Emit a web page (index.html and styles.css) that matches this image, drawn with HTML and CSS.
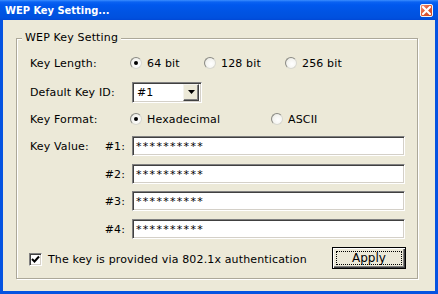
FILE: index.html
```html
<!DOCTYPE html>
<html>
<head>
<meta charset="utf-8">
<title>WEP Key Setting</title>
<link rel="stylesheet" href="styles.css">
</head>
<body>
<div class="window">
  <div class="titlebar">
    <span class="title">WEP Key Setting...</span>
    <span class="close"><svg width="9" height="9" viewBox="0 0 9 9"><path d="M1 1 L8 8 M8 1 L1 8" stroke="#fff" stroke-width="2.2" stroke-linecap="square"/></svg></span>
  </div>
  <div class="client">
    <div class="group">
      <span class="legend">WEP Key Setting</span>

      <div class="row row-length">
        <span class="label">Key Length:</span>
        <div class="opts opts-length">
          <span class="opt"><span class="radio on"></span>64 bit</span>
          <span class="opt"><span class="radio"></span>128 bit</span>
          <span class="opt"><span class="radio"></span>256 bit</span>
        </div>
      </div>

      <div class="row row-id">
        <span class="label">Default Key ID:</span>
        <div class="select">
          <span class="sel-val">#1</span>
          <span class="sel-btn"><svg width="7" height="4" viewBox="0 0 7 4"><path d="M0 0 H7 L3.5 4 Z" fill="#000"/></svg></span>
        </div>
      </div>

      <div class="row row-format">
        <span class="label">Key Format:</span>
        <div class="opts opts-format">
          <span class="opt"><span class="radio on"></span>Hexadecimal</span>
          <span class="opt"><span class="radio"></span>ASCII</span>
        </div>
      </div>

      <div class="row row-key k1">
        <span class="label label-key"><span>Key Value:</span><span>#1:</span></span>
        <div class="input">**********</div>
      </div>
      <div class="row row-key k2">
        <span class="label label-key"><span></span><span>#2:</span></span>
        <div class="input">**********</div>
      </div>
      <div class="row row-key k3">
        <span class="label label-key"><span></span><span>#3:</span></span>
        <div class="input">**********</div>
      </div>
      <div class="row row-key k4">
        <span class="label label-key"><span></span><span>#4:</span></span>
        <div class="input">**********</div>
      </div>

      <div class="row row-bottom">
        <span class="check">
          <span class="box"><svg width="9" height="9" viewBox="0 0 9 9"><path d="M1 4 L3.5 6.5 L8 1.5" stroke="#000" stroke-width="2" fill="none"/></svg></span>
          The key is provided via 802.1x authentication
        </span>
        <button class="apply"><span class="focus">Apply</span></button>
      </div>
    </div>
  </div>
</div>
</body>
</html>
```

FILE: styles.css
```css
* { box-sizing: border-box; }
html, body { margin: 0; padding: 0; }
body {
  width: 438px;
  height: 294px;
  overflow: hidden;
  font-family: "DejaVu Sans", Verdana, sans-serif;
  font-size: 11px;
  letter-spacing: 0.15px;
  color: #000;
}
.window {
  width: 438px;
  height: 294px;
  display: flex;
  flex-direction: column;
  background: #0553e1;
}
.titlebar {
  height: 20px;
  flex: none;
  display: flex;
  align-items: center;
  justify-content: space-between;
  padding: 0 5px 0 5px;
  background: linear-gradient(#3b8dff 0, #0a62f2 2px, #0058ee 5px, #0054e3 12px, #0050de 18px, #0048d6 20px);
}
.title {
  color: #fff;
  font-family: "DejaVu Sans Condensed", "DejaVu Sans", sans-serif;
  font-weight: bold;
  font-size: 11px;
  letter-spacing: 0;
}
.close {
  width: 13px;
  height: 13px;
  margin-top: 1px;
  border: 1px solid #f4f4f4;
  border-radius: 2px;
  background: linear-gradient(135deg, #f4957a 0, #e35a34 45%, #cc4520 100%);
  display: flex;
  align-items: center;
  justify-content: center;
}
.close svg { display: block; }
.client {
  flex: 1;
  margin: 0 3px 3px 3px;
  background: #ece9d8;
  padding: 18px 17px 12px 13px;
  display: flex;
}
.group {
  flex: 1;
  position: relative;
  border: 1px solid #aca899;
  box-shadow: 1px 1px 0 #fff, inset 1px 1px 0 #fff;
  padding: 14px 11px 0 13px;
  display: flex;
  flex-direction: column;
}
.legend {
  position: absolute;
  top: -8px;
  left: 5px;
  padding: 0 3px;
  line-height: 13px;
  background: #ece9d8;
}
.row {
  display: flex;
  align-items: center;
  height: 20px;
}
.label {
  width: 100px;
  flex: none;
}
.label-key {
  display: flex;
  justify-content: space-between;
  padding-right: 5px;
}
.row-id { margin-top: 9px; height: 21px; }
.row-format { margin-top: 6px; }
.k1 { margin-top: 7px; }
.k2 { margin-top: 8px; }
.k3 { margin-top: 7px; }
.k4 { margin-top: 8px; }
.row-bottom {
  margin-top: 8px;
  height: 22px;
  justify-content: space-between;
}
.opts { display: flex; align-items: center; }
.opt { display: flex; align-items: center; }
.opts-length .opt:nth-child(1) { width: 74px; }
.opts-length .opt:nth-child(2) { width: 81px; }
.opts-format .opt:nth-child(1) { width: 141px; }
.radio {
  width: 12px;
  height: 12px;
  border-radius: 50%;
  margin-right: 5px;
  border: 1px solid;
  border-color: #8a8a84 #d8d8d0 #d8d8d0 #8a8a84;
  background: radial-gradient(circle at 60% 60%, #fff 0, #f4f4f0 55%, #d8d8d0 100%);
  position: relative;
  flex: none;
}
.radio.on::after {
  content: "";
  position: absolute;
  left: 3px;
  top: 3px;
  width: 4px;
  height: 4px;
  border-radius: 50%;
  background: #000;
}
.select {
  margin-left: 2px;
  width: 70px;
  height: 21px;
  background: #fff;
  border: 1px solid;
  border-color: #808080 #fff #fff #808080;
  box-shadow: inset 1px 1px 0 #404040, inset -1px -1px 0 #d4d0c8;
  display: flex;
  align-items: center;
  justify-content: space-between;
  padding: 2px 2px 2px 4px;
}
.sel-btn {
  width: 16px;
  height: 17px;
  margin-top: -1px;
  background: #ece9d8;
  border: 1px solid;
  border-color: #f4f3ee #404040 #404040 #f4f3ee;
  box-shadow: inset -1px -1px 0 #808080;
  display: flex;
  align-items: center;
  justify-content: center;
}
.sel-btn svg { display: block; }
.input {
  margin-left: 2px;
  flex: 1;
  margin-right: 1px;
  height: 20px;
  background: #fff;
  border: 1px solid;
  border-color: #808080 #fff #fff #808080;
  box-shadow: inset 1px 1px 0 #404040, inset -1px -1px 0 #d4d0c8;
  padding: 1px 3px 0 3px;
  display: flex;
  align-items: center;
  letter-spacing: 1.3px;
}
.check { display: flex; align-items: center; margin-top: 2px; }
.box {
  width: 13px;
  height: 13px;
  margin-left: -1px;
  margin-right: 6px;
  background: #fff;
  border: 1px solid;
  border-color: #808080 #fff #fff #808080;
  box-shadow: inset 1px 1px 0 #404040, inset -1px -1px 0 #d4d0c8;
  display: flex;
  align-items: center;
  justify-content: center;
}
.box svg { display: block; }
.apply {
  width: 74px;
  height: 22px;
  margin-right: 0;
  padding: 3px;
  font: inherit;
  font-size: 12px;
  color: #000;
  background: #ece9d8;
  border: 1px solid #000;
  box-shadow: inset 1px 1px 0 #fff, inset -1px -1px 0 #404040, inset -2px -2px 0 #808080;
  display: flex;
}
.focus {
  flex: 1;
  border: 1px dotted #000;
  display: flex;
  align-items: center;
  justify-content: center;
  line-height: 12px;
}
```
